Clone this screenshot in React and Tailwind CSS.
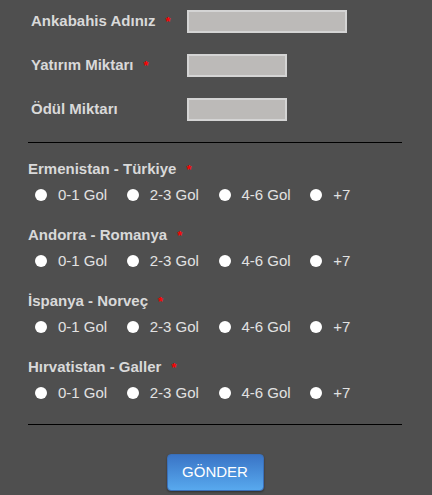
import React from 'react';

const matches = ['Ermenistan - Türkiye', 'Andorra - Romanya', 'İspanya - Norveç', 'Hırvatistan - Galler'];
const options = ['0-1 Gol', '2-3 Gol', '4-6 Gol', '+7'];

const Star = () => <span className="ml-[10px] text-[13px] text-[#ff0000]">*</span>;

const Field = ({ label, required, wide }) => (
  <div className="flex h-[23px] items-center">
    <label className="w-[159px] pl-[3px] text-[15px] font-bold text-[#d9d9d9]">
      {label}
      {required && <Star />}
    </label>
    <input
      type="text"
      className={`h-[23px] ${wide ? 'w-[160px]' : 'w-[100px]'} border-2 border-[#d4d4d4] bg-[#bcbab8] outline-none`}
    />
  </div>
);

export default function App() {
  return (
    <div className="min-h-screen bg-[#4f4f4f] pl-[28px] pr-[30px] pt-[10px] text-[#e0e0e0]" style={{ fontFamily: '"Liberation Sans", Arial, sans-serif' }}>
      <div className="flex flex-col gap-[21px]">
        <Field label="Ankabahis Adınız" required wide />
        <Field label="Yatırım Miktarı" required />
        <Field label="Ödül Miktarı" />
      </div>

      <hr className="mt-[21px] border-0 border-t border-black" />

      <div className="mt-[17px] flex flex-col gap-[22px]">
        {matches.map((m, i) => (
          <div key={m} className="flex flex-col gap-[8px]">
            <div className="h-[18px] text-[15px] font-bold leading-[18px] text-[#d9d9d9]">
              {m}
              <Star />
            </div>
            <div className="flex h-[18px] items-center pl-[7px]">
              {options.map((o) => (
                <label key={o} className="flex w-[93px] items-center gap-[11px] text-[15px] leading-[18px] text-[#e2e2e2]">
                  <input type="radio" name={`m${i}`} className="h-[12px] w-[12px] appearance-none rounded-full bg-white" />
                  {o}
                </label>
              ))}
            </div>
          </div>
        ))}
      </div>

      <hr className="mt-[22px] border-0 border-t border-black" />

      <div className="flex justify-center pt-[29px]">
        <button className="h-[37px] w-[97px] rounded-[4px] border border-[#3a6fb8] bg-gradient-to-b from-[#3a74c6] to-[#58a9ee] text-[15px] text-white shadow-[0_1px_2px_rgba(0,0,0,0.4)]">
          GÖNDER
        </button>
      </div>
    </div>
  );
}
